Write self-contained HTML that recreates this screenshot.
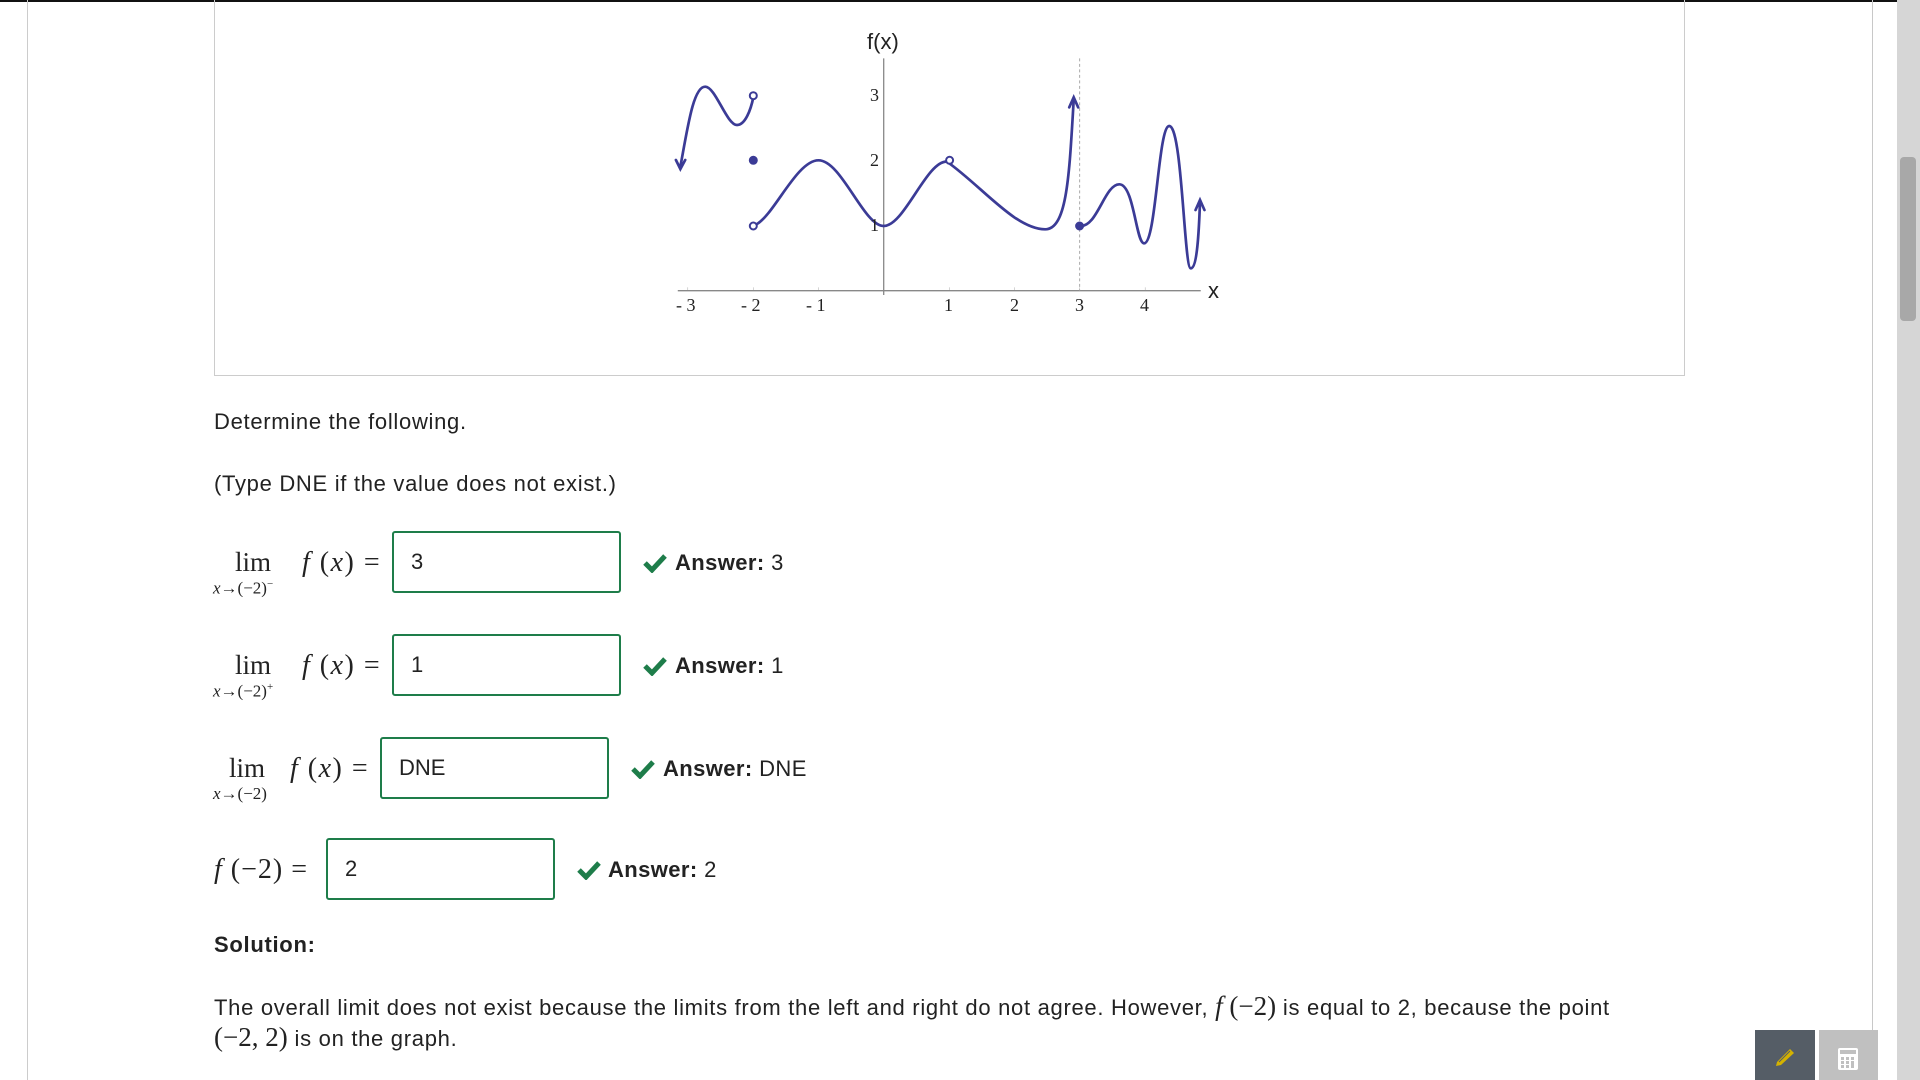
<!DOCTYPE html>
<html><head><meta charset="utf-8"><style>
html,body{margin:0;padding:0;}
body{width:1920px;height:1080px;position:relative;overflow:hidden;background:#fff;font-family:"Liberation Sans",sans-serif;color:#222;}
.a{position:absolute;}
.t{font-size:22px;letter-spacing:0.7px;line-height:1;white-space:nowrap;}
.box{position:absolute;border:2px solid #1e7d4a;border-radius:3px;box-sizing:border-box;width:229px;height:62px;font-size:22px;padding-left:17px;line-height:58px;color:#222;}
.ans{position:absolute;font-size:22px;letter-spacing:0.4px;white-space:nowrap;line-height:1;}
.ans b{font-weight:bold;}
.ser{font-family:"Liberation Serif",serif;letter-spacing:0;}
.m{position:absolute;font-family:"Liberation Serif",serif;white-space:nowrap;line-height:1;}
.i{font-style:italic;}
</style></head><body>
<div class="a" style="left:0;top:0;width:1920px;height:2px;background:#111"></div>
<div class="a" style="left:27px;top:0;width:1px;height:1080px;background:#ccc"></div>
<div class="a" style="left:1872px;top:0;width:1px;height:1080px;background:#c8c8c8"></div>
<div class="a" style="left:1897px;top:0;width:23px;height:1080px;background:#d6d6d6"></div>
<div class="a" style="left:1900px;top:157px;width:16px;height:164px;background:#a8a8a8;border-radius:4px"></div>

<div class="a" style="left:214px;top:0;width:1471px;height:376px;border:1px solid #ccc;border-top:none;box-sizing:border-box"></div>

<svg class="a" style="left:0;top:0" width="1920" height="400">
<g transform="translate(660,0) scale(0.37037,0.33333)">
<line x1="48" y1="872" x2="1460" y2="872" stroke="#888" stroke-width="1.3" vector-effect="non-scaling-stroke"/>
<line x1="604" y1="175" x2="604" y2="885" stroke="#888" stroke-width="1.3" vector-effect="non-scaling-stroke"/>
<line x1="1133" y1="175" x2="1133" y2="872" stroke="#aaa" stroke-width="1" stroke-dasharray="3,2.5" vector-effect="non-scaling-stroke"/>
<g stroke="#888" stroke-width="1" vector-effect="non-scaling-stroke">
<line x1="75" y1="862" x2="75" y2="872"/><line x1="252" y1="862" x2="252" y2="872"/><line x1="428" y1="862" x2="428" y2="872"/><line x1="781" y1="862" x2="781" y2="872"/><line x1="957" y1="862" x2="957" y2="872"/><line x1="1133" y1="862" x2="1133" y2="872"/><line x1="1310" y1="862" x2="1310" y2="872"/>
</g>
<g fill="none" stroke="#3b3b96" stroke-width="2.7" stroke-linecap="round" vector-effect="non-scaling-stroke">
<path vector-effect="non-scaling-stroke" d="M55,500 C75,380 90,260 122,260 C150,260 180,375 208,375 C230,375 245,330 252,292"/>
<path vector-effect="non-scaling-stroke" d="M262,672 C310,640 370,481 428,481 C490,481 550,678 604,678 C660,678 720,481 775,485 C870,560 960,688 1040,688 C1100,688 1105,520 1117,300"/>
<path vector-effect="non-scaling-stroke" d="M1133,678 C1180,685 1200,553 1240,553 C1280,553 1285,730 1307,730 C1340,730 1345,378 1375,378 C1410,378 1415,805 1433,805 C1450,805 1455,700 1458,605"/>
<path vector-effect="non-scaling-stroke" d="M43,480 L55,507 L68,480"/>
<path vector-effect="non-scaling-stroke" d="M1105,322 L1117,292 L1129,322"/>
<path vector-effect="non-scaling-stroke" d="M1446,630 L1458,600 L1470,630"/>
</g>
</g>
<g font-family="Liberation Serif,serif" font-size="18" fill="#222">
<text x="676" y="311">- 3</text><text x="741" y="311">- 2</text><text x="806" y="311">- 1</text>
<text x="944" y="311">1</text><text x="1010" y="311">2</text><text x="1075" y="311">3</text><text x="1140" y="311">4</text>
<text x="870" y="101">3</text><text x="870" y="166">2</text><text x="870" y="231">1</text>
</g>
<text x="867" y="49" font-family="Liberation Sans,sans-serif" font-size="22" fill="#222">f(x)</text>
<text x="1208" y="298" font-family="Liberation Sans,sans-serif" font-size="22" fill="#222">x</text>
<g stroke="#3b3b96" stroke-width="2">
<circle cx="753.3" cy="95.7" r="3.5" fill="#fff"/>
<circle cx="753.3" cy="226" r="3.5" fill="#fff"/>
<circle cx="949.6" cy="160.3" r="3.5" fill="#fff"/>
<circle cx="753.3" cy="160.3" r="3.5" fill="#3b3b96"/>
<circle cx="1079.6" cy="226" r="3.5" fill="#3b3b96"/>
</g>
</svg>

<div class="a t" style="left:214px;top:411px">Determine the following.</div>
<div class="a t" style="left:214px;top:473px">(Type DNE if the value does not exist.)</div>

<!-- row1 -->
<div class="m" style="left:235px;top:549px;font-size:27px">lim</div>
<div class="m" style="left:213px;top:579px;font-size:17px"><span class="i">x</span>→(−2)<sup style="font-size:11px">−</sup></div>
<div class="m" style="left:302px;top:549px;font-size:28px;letter-spacing:1.5px"><span class="i">f</span> (<span class="i">x</span>) =</div>
<div class="box" style="left:392px;top:531px">3</div>
<svg class="a" style="left:643px;top:553px" width="24" height="20"><path d="M2,10 L9,17 L22,3" fill="none" stroke="#1e7d4a" stroke-width="5"/></svg>
<div class="ans" style="left:675px;top:552px"><b>Answer:</b> 3</div>

<!-- row2 -->
<div class="m" style="left:235px;top:652px;font-size:27px">lim</div>
<div class="m" style="left:213px;top:682px;font-size:17px"><span class="i">x</span>→(−2)<sup style="font-size:11px">+</sup></div>
<div class="m" style="left:302px;top:652px;font-size:28px;letter-spacing:1.5px"><span class="i">f</span> (<span class="i">x</span>) =</div>
<div class="box" style="left:392px;top:634px">1</div>
<svg class="a" style="left:643px;top:656px" width="24" height="20"><path d="M2,10 L9,17 L22,3" fill="none" stroke="#1e7d4a" stroke-width="5"/></svg>
<div class="ans" style="left:675px;top:655px"><b>Answer:</b> 1</div>

<!-- row3 -->
<div class="m" style="left:229px;top:755px;font-size:27px">lim</div>
<div class="m" style="left:213px;top:785px;font-size:17px"><span class="i">x</span>→(−2)</div>
<div class="m" style="left:290px;top:755px;font-size:28px;letter-spacing:1.5px"><span class="i">f</span> (<span class="i">x</span>) =</div>
<div class="box" style="left:380px;top:737px">DNE</div>
<svg class="a" style="left:631px;top:759px" width="24" height="20"><path d="M2,10 L9,17 L22,3" fill="none" stroke="#1e7d4a" stroke-width="5"/></svg>
<div class="ans" style="left:663px;top:758px"><b>Answer:</b> DNE</div>

<!-- row4 -->
<div class="m" style="left:214px;top:856px;font-size:28px;letter-spacing:1px"><span class="i">f</span> (−2) =</div>
<div class="box" style="left:326px;top:838px">2</div>
<svg class="a" style="left:577px;top:860px" width="24" height="20"><path d="M2,10 L9,17 L22,3" fill="none" stroke="#1e7d4a" stroke-width="5"/></svg>
<div class="ans" style="left:608px;top:859px"><b>Answer:</b> 2</div>

<div class="a t" style="left:214px;top:934px;font-weight:bold">Solution:</div>
<div class="a t" style="left:214px;top:993px">The overall limit does not exist because the limits from the left and right do not agree. However, <span class="ser" style="font-size:27px"><i>f</i> (−2)</span> is equal to 2, because the point</div>
<div class="a t" style="left:214px;top:1024px"><span class="ser" style="font-size:27px">(−2, 2)</span> is on the graph.</div>

<div class="a" style="left:1755px;top:1030px;width:60px;height:50px;background:#555d66"></div>
<svg class="a" style="left:1773px;top:1044px" width="24" height="22"><path d="M4,18 L17,5 L21,9 L8,21 L3,22 Z" fill="#d4b200"/><line x1="6" y1="18" x2="17" y2="7" stroke="#555d66" stroke-width="1"/></svg>
<div class="a" style="left:1819px;top:1030px;width:59px;height:50px;background:#c0c0c0"></div>
<svg class="a" style="left:1837px;top:1047px" width="22" height="24"><rect x="1" y="1" width="20" height="22" rx="2" fill="#fff"/><rect x="3" y="3" width="16" height="4" fill="#c0c0c0"/><g fill="#c0c0c0"><rect x="4" y="10" width="3" height="3"/><rect x="9" y="10" width="3" height="3"/><rect x="14" y="10" width="3" height="3"/><rect x="4" y="14" width="3" height="3"/><rect x="9" y="14" width="3" height="3"/><rect x="4" y="18" width="3" height="3"/><rect x="9" y="18" width="3" height="3"/><rect x="14" y="14" width="3" height="7"/></g></svg>
</body></html>
